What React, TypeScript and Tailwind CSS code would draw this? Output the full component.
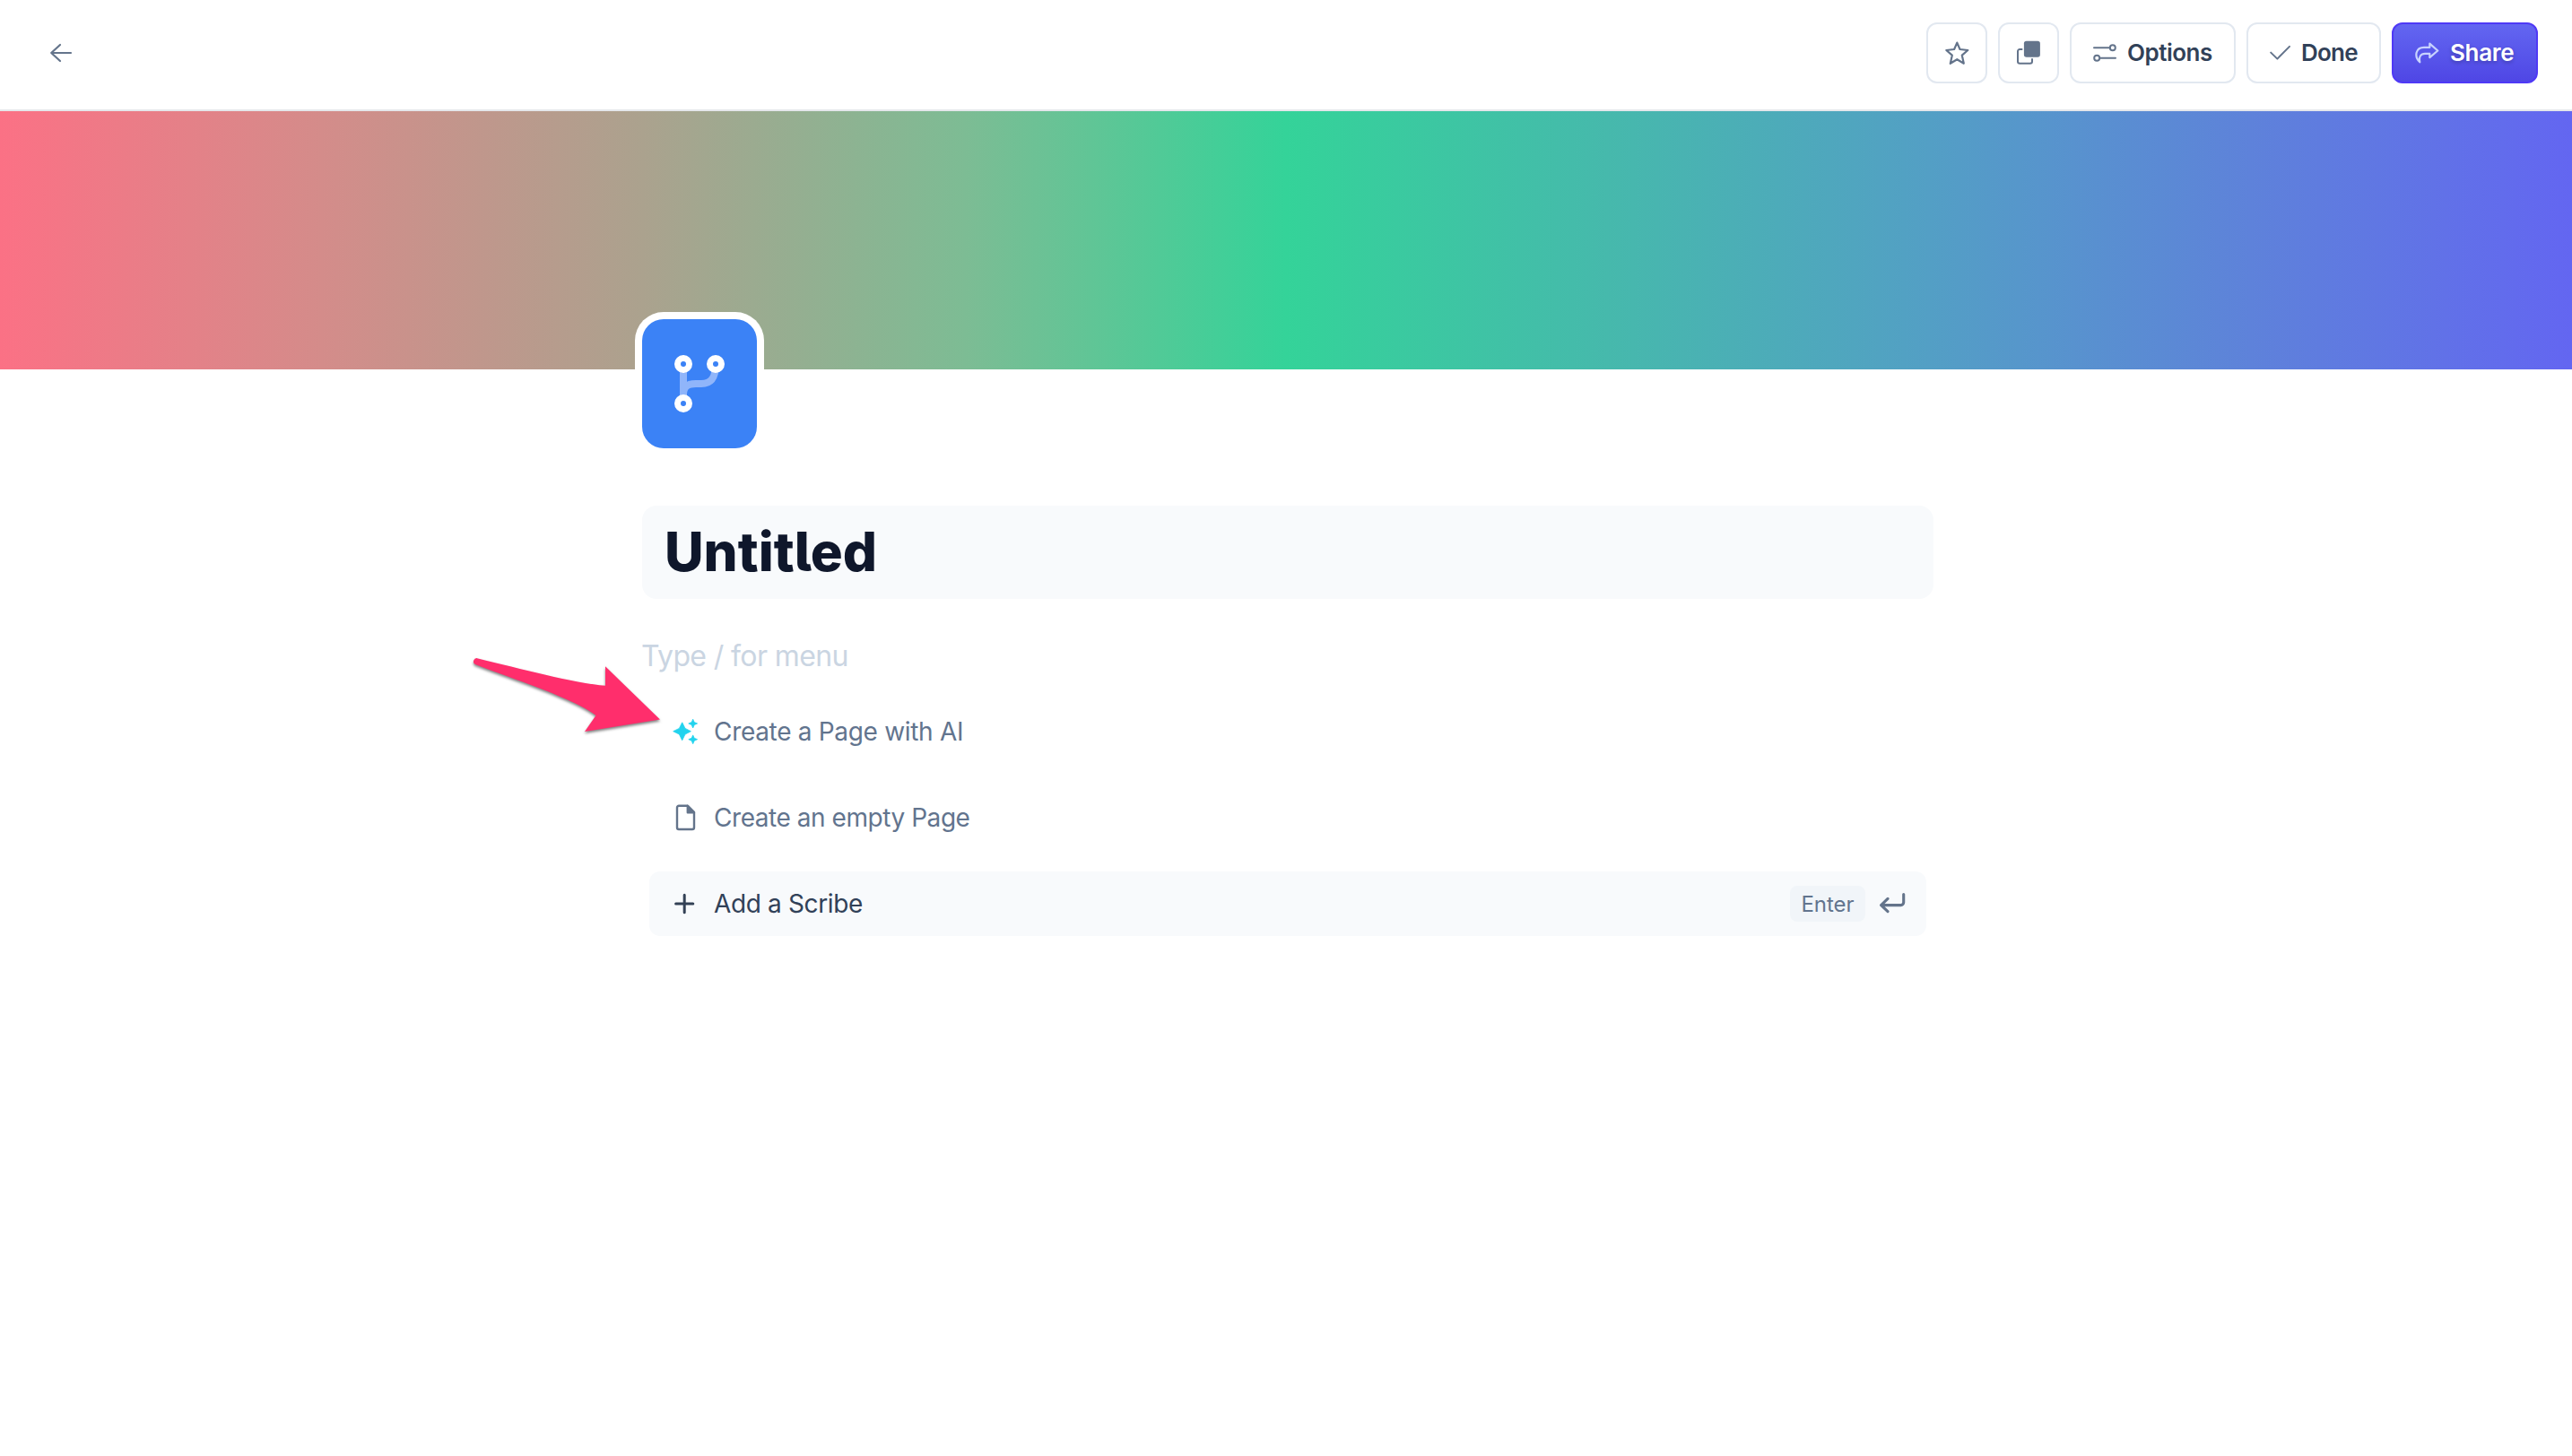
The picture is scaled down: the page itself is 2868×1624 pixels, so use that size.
import React from "react";

const buttonBase =
  "flex h-[68px] items-center rounded-xl border-2 text-[26px] font-semibold leading-none whitespace-nowrap";

function BackIcon() {
  return (
    <svg className="size-7" viewBox="0 0 28 28" fill="none" stroke="#64748b" strokeWidth="2.2" strokeLinecap="round" strokeLinejoin="round">
      <path d="M13 5 3.2 14 13 23M3.2 14H25" />
    </svg>
  );
}

function StarIcon() {
  return (
    <svg className="size-8" viewBox="0 0 32 32" fill="none" stroke="#64748b" strokeWidth="2.2" strokeLinejoin="round">
      <path d="M16.3 4.6 19.5 12 28.3 13 21.8 18.7 23.8 27.8 16.3 23.2 8.8 27.8 10.8 18.7 4.3 13 13.1 12Z" />
    </svg>
  );
}

function CopyIcon() {
  return (
    <svg className="size-8" viewBox="0 0 32 32" fill="none">
      <rect x="10.9" y="2.8" width="18" height="18" rx="2.8" fill="#64748b" />
      <path d="M9.3 12H6.2a2.2 2.2 0 0 0-2.2 2.2v11.4a2.2 2.2 0 0 0 2.2 2.2h11.6a2.2 2.2 0 0 0 2.2-2.2v-3.3" stroke="#64748b" strokeWidth="2" />
    </svg>
  );
}

function OptionsIcon() {
  return (
    <svg className="size-7" viewBox="0 0 28 28" fill="none" stroke="#64748b" strokeWidth="2">
      <path d="M1 8.2h17.8M8 19.8h17" strokeLinecap="round" />
      <circle cx="21.8" cy="8.2" r="3" />
      <circle cx="4.2" cy="19.8" r="3" />
    </svg>
  );
}

function CheckIcon() {
  return (
    <svg className="size-7" viewBox="0 0 28 28" fill="none" stroke="#64748b" strokeWidth="2" strokeLinecap="round" strokeLinejoin="round">
      <path d="M1.2 13.6 8.4 20.6 22 6.9" />
    </svg>
  );
}

function ShareIcon() {
  return (
    <svg className="size-7" viewBox="0 0 28 28" fill="none" stroke="#c7d2fe" strokeWidth="2.2" strokeLinejoin="round">
      <path d="M5.3 24.3C-1.6 17.5 1 7.9 10 7.9h6.3V3.7l9 7.8-9 7.6v-4.3H11c-4.6 0-7 3.4-5.7 9.5Z" />
    </svg>
  );
}

function BranchIcon() {
  return (
    <svg className="h-[144px] w-[128px]" viewBox="0 0 128 144" fill="none">
      <path d="M46 50V94M82 50C82 64 78 72 66 72H60C51 72 46 75 46 84" stroke="#90b5fa" strokeWidth="8" />
      <g stroke="#fff" strokeWidth="7" fill="#3b82f6">
        <circle cx="46" cy="50" r="6.5" />
        <circle cx="82" cy="50" r="6.5" />
        <circle cx="46" cy="94" r="6.5" />
      </g>
    </svg>
  );
}

function SparklesIcon() {
  return (
    <svg className="size-8" viewBox="0 0 32 32" fill="#22d3ee" stroke="#22d3ee" strokeWidth=".8" strokeLinejoin="round">
      <path d="M12.7 5.8 16 12.4 22.4 15.7 16 19 12.7 25.8 9.4 19 2.7 15.7 9.4 12.4Z" />
      <path d="M24.7 2.2 26.2 5.6 29.6 7 26.2 8.5 24.7 12 23.2 8.5 19.8 7 23.2 5.6Z" />
      <path d="M24.7 19.9 26.2 23.3 29.6 24.7 26.2 26.2 24.7 29.7 23.2 26.2 19.8 24.7 23.2 23.3Z" />
    </svg>
  );
}

function FileIcon() {
  return (
    <svg className="size-8" viewBox="0 0 32 32" fill="none" stroke="#64748b" strokeWidth="2.4" strokeLinejoin="round">
      <path d="M9 2.8h9.8L26 10.2V27a2 2 0 0 1-2 2H9a2 2 0 0 1-2-2V4.8a2 2 0 0 1 2-2Z" />
      <path d="M18.8 2.8v7.4H26Z" fill="#64748b" />
    </svg>
  );
}

function PlusIcon() {
  return (
    <svg className="size-8" viewBox="0 0 32 32" fill="none" stroke="#334155" strokeWidth="3" strokeLinecap="round">
      <path d="M15.2 6.2v19.6M5.6 16h19.2" />
    </svg>
  );
}

function ReturnIcon() {
  return (
    <svg className="size-8" viewBox="0 0 32 32" fill="none" stroke="#64748b" strokeWidth="3.1" strokeLinecap="round" strokeLinejoin="round">
      <path d="M28.7 5.6v9a3 3 0 0 1-3 3H3.6M11 10.4 3.6 17.6 11 24.6" />
    </svg>
  );
}

function PointerArrow() {
  return (
    <svg
      className="pointer-events-none absolute left-[510px] top-[700px] h-[140px] w-[260px] drop-shadow-[0_2px_1.5px_rgba(0,0,0,0.5)]"
      viewBox="0 0 260 140"
      fill="#ff2e6c"
    >
      <path d="M23 34.4C70 45.5 130 62 165 64.8V43.3L226 102.6 142 116 154.5 98C130 79 66 59 20.5 41.3A3.6 3.6 0 0 1 23 34.4Z" />
    </svg>
  );
}

export default function App() {
  return (
    <div className="relative flex h-[1624px] w-[2868px] flex-col overflow-hidden bg-white font-['Inter','Liberation_Sans',sans-serif] text-slate-700 [font-feature-settings:'cv05']">
      <header className="flex h-[124px] shrink-0 items-start justify-between border-b-2 border-gray-200 pt-[25px] pl-[54px] pr-[38px]">
        <button aria-label="Back" className="flex h-[68px] items-center">
          <BackIcon />
        </button>
        <div className="flex gap-3">
          <button aria-label="Favorite" className={`${buttonBase} w-[68px] justify-center border-slate-200`}>
            <StarIcon />
          </button>
          <button aria-label="Duplicate" className={`${buttonBase} w-[68px] justify-center border-slate-200`}>
            <CopyIcon />
          </button>
          <button className={`${buttonBase} w-[185px] gap-[10px] border-slate-200 pl-6 tracking-[-0.5px]`}>
            <OptionsIcon />
            Options
          </button>
          <button className={`${buttonBase} w-[150px] gap-[7px] border-slate-200 pl-6 tracking-[-0.75px]`}>
            <CheckIcon />
            Done
          </button>
          <button className={`${buttonBase} w-[163px] gap-[11px] border-indigo-600 bg-linear-to-b from-[#6366f1] to-[#4f46e5] pl-6 tracking-[-0.3px] text-white [text-shadow:0_2px_4px_rgba(0,0,0,0.25)]`}>
            <ShareIcon />
            Share
          </button>
        </div>
      </header>

      <div className="h-[288px] shrink-0 bg-[linear-gradient(to_right,#fb7185,#d48c8a_12.5%,#aba28e_25%,#7dbc94_37.5%,#34d399_50%,#46b9ac_62.5%,#539fc5_75%,#5e82da_87.5%,#6366f1)]" />

      <main className="ml-[716px] flex w-[1440px] flex-col">
        <div className="z-10 -mt-14 h-[144px] w-[128px] overflow-visible rounded-3xl bg-[#3b82f6] ring-8 ring-white">
          <BranchIcon />
        </div>

        <h1 className="mt-16 flex h-[104px] items-center rounded-2xl bg-slate-50 pb-[2px] pl-[25px] text-[60px] font-extrabold leading-none text-slate-900">
          Untitled
        </h1>

        <p className="-ml-px mt-10 flex h-12 items-center text-[32px] leading-none tracking-[-0.62px] text-slate-300">
          Type / for menu
        </p>

        <ul className="mt-6 flex flex-col gap-6 px-2 text-[28px] leading-none text-slate-500">
          <li className="flex h-[72px] items-center gap-4 pl-6 tracking-[-0.31px]">
            <SparklesIcon />
            Create a Page with AI
          </li>
          <li className="flex h-[72px] items-center gap-4 pl-6 tracking-[-0.45px]">
            <FileIcon />
            Create an empty Page
          </li>
          <li className="flex h-[72px] items-center rounded-xl bg-slate-50 pr-[22px] pl-6 text-slate-700">
            <PlusIcon />
            <span className="ml-4 tracking-[-0.36px]">Add a Scribe</span>
            <kbd className="ml-auto flex h-10 w-[84px] items-center justify-center rounded-lg bg-slate-100 pt-px font-['Inter','Liberation_Sans',sans-serif] text-2xl leading-none text-slate-500">
              Enter
            </kbd>
            <span className="ml-[14px]">
              <ReturnIcon />
            </span>
          </li>
        </ul>
      </main>

      <PointerArrow />
    </div>
  );
}
